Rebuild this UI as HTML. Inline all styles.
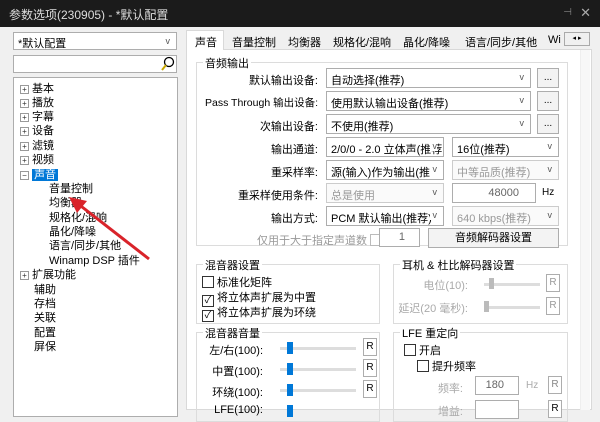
<!DOCTYPE html><html><head><meta charset="utf-8"><style>
*{box-sizing:border-box;margin:0;padding:0}
body{width:600px;height:410px;overflow:hidden;background:#f0f0f0;font-family:"Liberation Sans","Noto Sans CJK SC",sans-serif;font-size:11px;color:#000;position:relative}
.a{position:absolute;white-space:nowrap}
.title{left:0;top:0;width:600px;height:27px;background:#1b1b1b;color:#ddd;font-size:12px;padding:6px 0 0 9px}
.box{position:absolute;border:1px solid #adadad;background:#fff}
.cb{position:absolute;border:1px solid #adadad;background:#fff;height:20px;padding:3px 4px;font-size:11px;white-space:nowrap;overflow:hidden}
.cb:after{content:"v";position:absolute;right:6px;top:3px;color:#555;font-size:9px;background:inherit;padding-left:3px}
.dis{color:#999;background:#fafafa;border-color:#ccc}
.btn{position:absolute;border:1px solid #adadad;background:#f3f3f3;height:20px;text-align:center;font-size:10px;line-height:18px}
.lbl{position:absolute;text-align:right;white-space:nowrap;font-size:11px}
.grp{position:absolute;border:1px solid #dcdcdc}
.gt{position:absolute;background:#fff;padding:0 2px;top:-8px;left:6px;font-size:11px}
.tree div{position:absolute;white-space:nowrap;font-size:11px}
.pl{width:9px;height:9px;border:1px solid #999;background:#fff;font-size:8px;line-height:7px;text-align:center;color:#333;display:inline-block;vertical-align:0}
.chk{display:inline-block;width:12px;height:12px;border:1px solid #333;vertical-align:-2px;margin-right:3px;font-size:10px;line-height:10px;text-align:center}
.sl{position:absolute;height:3px;background:#ddd;}
.th{position:absolute;width:6px;height:12px;background:#0078d7}
.r{position:absolute;width:14px;height:18px;border:1px solid #adadad;background:#fff;font-size:10px;text-align:center;line-height:16px}
.tab{position:absolute;top:34px;font-size:11px;white-space:nowrap}
</style></head><body>
<div class="a title">参数选项(230905) - *默认配置</div>
<div class="a" style="right:28px;top:7px;color:#888;font-size:10px">⊣</div>
<div class="a" style="right:9px;top:5px;color:#aaa;font-size:13px">✕</div>

<div class="cb" style="left:13px;top:32px;width:164px;height:18px;padding-top:2px">*默认配置</div>
<div class="box" style="left:13px;top:55px;width:164px;height:18px"></div>
<svg class="a" style="left:160px;top:56px" width="16" height="16"><circle cx="9" cy="6" r="4.5" fill="none" stroke="#000" stroke-width="1.3"/><line x1="6" y1="9" x2="2" y2="14" stroke="#c9a800" stroke-width="2"/></svg>
<div class="box" style="left:13px;top:77px;width:165px;height:340px"></div>
<div class="tree">
<div style="left:20px;top:80px"><span class="pl">+</span> 基本</div>
<div style="left:20px;top:94px"><span class="pl">+</span> 播放</div>
<div style="left:20px;top:108px"><span class="pl">+</span> 字幕</div>
<div style="left:20px;top:122px"><span class="pl">+</span> 设备</div>
<div style="left:20px;top:137px"><span class="pl">+</span> 滤镜</div>
<div style="left:20px;top:151px"><span class="pl">+</span> 视频</div>
<div style="left:20px;top:166px"><span class="pl">−</span> <span style="background:#0078d7;color:#fff;padding:0 2px">声音</span></div>
<div style="left:49px;top:180px">音量控制</div>
<div style="left:49px;top:194px">均衡器</div>
<div style="left:49px;top:209px">规格化/混响</div>
<div style="left:49px;top:223px">晶化/降噪</div>
<div style="left:49px;top:237px">语言/同步/其他</div>
<div style="left:49px;top:252px">Winamp DSP 插件</div>
<div style="left:20px;top:266px"><span class="pl">+</span> 扩展功能</div>
<div style="left:34px;top:281px">辅助</div>
<div style="left:34px;top:295px">存档</div>
<div style="left:34px;top:309px">关联</div>
<div style="left:34px;top:324px">配置</div>
<div style="left:34px;top:338px">屏保</div>
</div>
<svg class="a" style="left:65px;top:195px" width="90" height="70"><line x1="84" y1="64" x2="12" y2="8" stroke="#d9232a" stroke-width="3"/><polygon points="4,2 22,6 12,18" fill="#d9232a"/></svg>

<!-- tabs -->
<div class="a" style="left:186px;top:49px;width:406px;height:361px;background:#fff;border:1px solid #d9d9d9"></div>
<div class="a" style="left:186px;top:30px;width:38px;height:20px;background:#fff;border:1px solid #d9d9d9;border-bottom:none"></div>
<div class="tab" style="left:195px">声音</div>
<div class="tab" style="left:232px">音量控制</div>
<div class="tab" style="left:288px">均衡器</div>
<div class="tab" style="left:333px">规格化/混响</div>
<div class="tab" style="left:403px">晶化/降噪</div>
<div class="tab" style="left:465px">语言/同步/其他</div>
<div class="tab" style="left:548px;width:14px;overflow:hidden">Wi</div>
<div class="a" style="left:564px;top:32px;width:26px;height:14px;background:#f0f0f0;border:1px solid #aaa;font-size:7px;text-align:center;line-height:12px">◂ ▸</div>
<div class="a" style="left:580px;top:50px;width:10px;height:360px;background:#f7f7f7;border-left:1px solid #eee"></div>

<div class="grp" style="left:196px;top:62px;width:372px;height:184px"><span class="gt">音频输出</span></div>
<div class="lbl" style="right:282px;top:72px">默认输出设备:</div>
<div class="cb" style="left:326px;top:68px;width:205px">自动选择(推荐)</div>
<div class="btn" style="left:537px;top:68px;width:22px">...</div>
<div class="lbl" style="right:282px;top:95px;font-size:10.5px">Pass Through 输出设备:</div>
<div class="cb" style="left:326px;top:91px;width:205px">使用默认输出设备(推荐)</div>
<div class="btn" style="left:537px;top:91px;width:22px">...</div>
<div class="lbl" style="right:282px;top:118px">次输出设备:</div>
<div class="cb" style="left:326px;top:114px;width:205px">不使用(推荐)</div>
<div class="btn" style="left:537px;top:114px;width:22px">...</div>
<div class="lbl" style="right:282px;top:141px">输出通道:</div>
<div class="cb" style="left:326px;top:137px;width:118px">2/0/0 - 2.0 立体声(推荐</div>
<div class="cb" style="left:452px;top:137px;width:107px">16位(推荐)</div>
<div class="lbl" style="right:282px;top:164px">重采样率:</div>
<div class="cb" style="left:326px;top:160px;width:118px">源(输入)作为输出(推</div>
<div class="cb dis" style="left:452px;top:160px;width:107px">中等品质(推荐)</div>
<div class="lbl" style="right:282px;top:187px">重采样使用条件:</div>
<div class="cb dis" style="left:326px;top:183px;width:118px">总是使用</div>
<div class="box" style="left:452px;top:183px;width:84px;height:20px;text-align:right;padding:3px 16px 0 0;color:#666;font-size:11px">48000</div>
<div class="a" style="left:542px;top:187px;font-size:10px">Hz</div>
<div class="lbl" style="right:282px;top:210px">输出方式:</div>
<div class="cb" style="left:326px;top:206px;width:118px">PCM 默认输出(推荐)</div>
<div class="cb dis" style="left:452px;top:206px;width:107px">640 kbps(推荐)</div>
<div class="lbl" style="left:257px;top:232px;color:#999">仅用于大于指定声道数 <span class="chk" style="border-color:#bbb"></span></div>
<div class="box" style="left:379px;top:228px;width:41px;height:19px;text-align:right;padding:2px 14px 0 0;color:#666">1</div>
<div class="btn" style="left:428px;top:228px;width:131px;font-size:11px">音频解码器设置</div>

<div class="grp" style="left:196px;top:264px;width:184px;height:60px"><span class="gt">混音器设置</span></div>
<div class="a" style="left:202px;top:274px"><span class="chk"></span>标准化矩阵</div>
<div class="a" style="left:202px;top:289px"><span class="chk">✓</span>将立体声扩展为中置</div>
<div class="a" style="left:202px;top:304px"><span class="chk">✓</span>将立体声扩展为环绕</div>
<div class="grp" style="left:393px;top:264px;width:175px;height:60px"><span class="gt">耳机 &amp; 杜比解码器设置</span></div>
<div class="lbl" style="right:132px;top:277px;color:#aaa">电位(10):</div>
<div class="sl" style="left:484px;top:283px;width:56px"></div><div class="a" style="left:489px;top:278px;width:5px;height:11px;background:#bbb"></div>
<div class="r" style="left:546px;top:274px;color:#999">R</div>
<div class="lbl" style="right:132px;top:300px;color:#aaa">延迟(20 毫秒):</div>
<div class="sl" style="left:484px;top:306px;width:56px"></div><div class="a" style="left:484px;top:301px;width:5px;height:11px;background:#bbb"></div>
<div class="r" style="left:546px;top:297px;color:#999">R</div>

<div class="grp" style="left:196px;top:332px;width:184px;height:90px"><span class="gt">混音器音量</span></div>
<div class="lbl" style="right:337px;top:342px">左/右(100):</div>
<div class="sl" style="left:280px;top:347px;width:76px"></div><div class="th" style="left:287px;top:342px"></div><div class="r" style="left:363px;top:338px">R</div>
<div class="lbl" style="right:337px;top:363px">中置(100):</div>
<div class="sl" style="left:280px;top:368px;width:76px"></div><div class="th" style="left:287px;top:363px"></div><div class="r" style="left:363px;top:359px">R</div>
<div class="lbl" style="right:337px;top:384px">环绕(100):</div>
<div class="sl" style="left:280px;top:389px;width:76px"></div><div class="th" style="left:287px;top:384px"></div><div class="r" style="left:363px;top:380px">R</div>
<div class="lbl" style="right:337px;top:404px">LFE(100):</div>
<div class="th" style="left:287px;top:405px"></div>

<div class="grp" style="left:393px;top:332px;width:175px;height:90px"><span class="gt">LFE 重定向</span></div>
<div class="a" style="left:404px;top:342px"><span class="chk"></span>开启</div>
<div class="a" style="left:417px;top:358px"><span class="chk"></span>提升频率</div>
<div class="lbl" style="right:137px;top:380px;color:#aaa">频率:</div>
<div class="box" style="left:475px;top:376px;width:44px;height:19px;text-align:right;padding:2px 14px 0 0;color:#666">180</div>
<div class="a" style="left:526px;top:380px;color:#aaa;font-size:10px">Hz</div>
<div class="r" style="left:548px;top:376px;color:#888">R</div>
<div class="lbl" style="right:137px;top:403px;color:#aaa">增益:</div>
<div class="box" style="left:475px;top:400px;width:44px;height:19px"></div>
<div class="r" style="left:548px;top:400px">R</div>
</body></html>
